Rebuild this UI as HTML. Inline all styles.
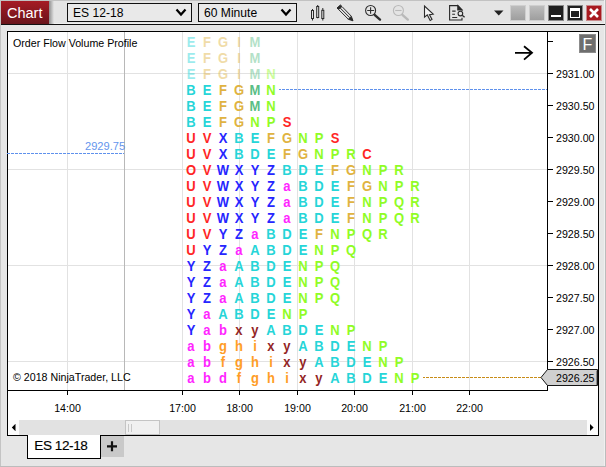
<!DOCTYPE html>
<html><head><meta charset="utf-8"><title>Chart</title>
<style>
*{margin:0;padding:0;box-sizing:border-box}
html,body{width:606px;height:467px;overflow:hidden;background:#e6e6e6;font-family:"Liberation Sans",sans-serif}
body{position:relative}
i,b{font-style:normal}
#topbar{position:absolute;left:0;top:0;width:606px;height:24px;background:#e4e4e4;border-top:1px solid #c2c2c2;border-bottom:1px solid #f0f0f0}
#topline{position:absolute;left:1px;top:24px;width:604px;height:1px;background:#111}
#chartbtn{position:absolute;left:1px;top:1px;width:48px;height:23px;background:linear-gradient(#a61b24,#69141b);color:#fff;font-size:15.2px;line-height:24.4px;padding-left:6.3px}
#chartbtn span{display:inline-block;transform:scaleX(.955);transform-origin:0 50%}
#chartsh{position:absolute;left:49px;top:1px;width:5px;height:23px;background:linear-gradient(90deg,#8e8e8e,#e4e4e4)}
.dd{position:absolute;top:3px;height:19px;border:1px solid #111;background:#e9e9e9;font-size:12.1px;line-height:19px;padding-left:5px;color:#000}
.dd svg{position:absolute;right:4px;top:4px}
#panel{position:absolute;left:7px;top:31px;width:592px;height:405px;background:#fff;border:1px solid #000}
#plot{position:absolute;left:8px;top:32px;width:539px;height:358px;background:#fff;overflow:hidden}
.vg{position:absolute;top:32px;width:1px;height:358px;background:#e2e2e2}
.hg{position:absolute;left:8px;width:539px;height:1px;background:#e2e2e2}
#sess{position:absolute;left:124px;top:32px;width:1px;height:358px;background:#b8b8b8}
#yaxis{position:absolute;left:547px;top:32px;width:1px;height:359px;background:#000}
#xaxis{position:absolute;left:8px;top:390px;width:540px;height:1px;background:#000}
.tk{position:absolute;left:548px;width:5px;height:1px;background:#000}
.tt{position:absolute;top:391px;width:1px;height:4px;background:#000}
.pl{position:absolute;left:556px;font-size:10.67px;line-height:14px;color:#000;white-space:nowrap}
.tl{position:absolute;top:401px;width:41px;text-align:center;font-size:10.67px;line-height:14px;color:#000}
.row{position:absolute;left:183px;height:16px;white-space:nowrap;font-size:14px;line-height:16px;font-weight:bold}
.row b{display:inline-block;width:16px;text-align:center;transform:scaleX(.93)}
.fade{opacity:.45}
.r{color:#ff2626}.b{color:#2626ff}.m{color:#ff26ff}.o{color:#ff9d26}.n{color:#932626}
.t{color:#26d5d8}.g{color:#e0b341}.s{color:#59be86}.l{color:#90fc26}
#title{position:absolute;left:13px;top:36px;font-size:10.67px;line-height:14px;color:#000}
#copy{position:absolute;left:13px;top:370px;font-size:10.67px;line-height:14px;color:#000}
#lvl{position:absolute;left:85px;top:139px;font-size:11.1px;line-height:14px;color:#6495ed}
.dash{position:absolute;height:1px}
#fbtn{position:absolute;left:579px;top:34px;width:17px;height:19px;background:#6e6e6e;border:1px solid #8c8c8c;color:#fff;font-size:16px;line-height:19px;text-align:center}
#scroll{position:absolute;left:8px;top:420px;width:590px;height:15px;background:#e2e2e2;border-left:11px solid #fcfcfc;border-right:11px solid #fcfcfc}
#thumb{position:absolute;left:125px;top:420px;width:35px;height:15px;background:#f0f0f0;border:1px solid #c4c4c4}
#tab{position:absolute;left:27px;top:435px;width:74px;height:24px;background:#fff;border:1px solid #000;border-top:none;font-size:13.6px;line-height:22.6px;padding-left:6.3px;letter-spacing:-.45px;-webkit-text-stroke:.15px #000}
#plus{position:absolute;left:101px;top:436px;width:23px;height:21px;background:#c9c9c9}
#pricemark{position:absolute;left:541px;top:370px}
.wb{position:absolute;top:5px;width:16px;height:16px}
</style></head><body>
<div id="topbar"></div><i style="position:absolute;left:0;top:0;width:1px;height:467px;background:#c4c4c4"></i><i style="position:absolute;left:604px;top:0;width:1px;height:467px;background:#f0f0f0"></i><i style="position:absolute;left:605px;top:0;width:1px;height:467px;background:#bcbcbc"></i><i style="position:absolute;left:0;top:466px;width:606px;height:1px;background:#bcbcbc"></i><div id="topline"></div>
<div id="chartsh"></div><div id="chartbtn"><span>Chart</span></div>
<div class="dd" style="left:67px;width:125px">ES 12-18<svg width="12" height="9" viewBox="0 0 12 9"><path d="M1.5 1.5 L6 6.5 L10.5 1.5" fill="none" stroke="#000" stroke-width="2.2"/></svg></div>
<div class="dd" style="left:198px;width:99px">60 Minute<svg width="12" height="9" viewBox="0 0 12 9"><path d="M1.5 1.5 L6 6.5 L10.5 1.5" fill="none" stroke="#000" stroke-width="2.2"/></svg></div>
<svg id="icons" style="position:absolute;left:300px;top:0" width="306" height="24" viewBox="300 0 306 24">
<!-- bars -->
<g fill="none" stroke="#2a2a2a" stroke-width="1"><rect x="311.5" y="10.5" width="2" height="8"/><path d="M312.5 9v1.5M312.5 18.5v2"/>
<rect x="316.7" y="6.5" width="2" height="11"/><path d="M317.7 5v1.5M317.7 17.5v0.8"/>
<rect x="321.8" y="10.3" width="2" height="8.2"/><path d="M322.8 8v2.3M322.8 18.5v2"/></g>
<!-- pencil -->
<g stroke="#2a2a2a" stroke-width="1" fill="none"><path d="M337 8 L340.4 5 L342 6.5 L338.5 9.5 Z" fill="#2a2a2a"/><path d="M338.7 9.6 L348.3 19.2 M342 6.6 L351.3 16.2 M340.3 8.1 L349.8 17.7"/><path d="M348.3 19.3 L351.3 16.3 L353 20.8 Z" fill="#2a2a2a"/></g>
<!-- zoom in -->
<g fill="none" stroke="#2e2e2e"><circle cx="370.6" cy="10.5" r="5" stroke-width="1.1"/><path d="M367.2 10.5h7M370.6 7.3v6.4" stroke-width="1.1"/><path d="M374.6 14.8 L380 19.6" stroke-width="2.4" stroke-linecap="round"/></g>
<!-- zoom out -->
<g fill="none" stroke="#b9b9b9"><circle cx="398.4" cy="10.5" r="5" stroke-width="1.1"/><path d="M395.2 10.5h6.4" stroke-width="1.1"/><path d="M402.4 14.8 L407.8 19.6" stroke-width="2.4" stroke-linecap="round"/></g>
<!-- pointer -->
<path d="M424.5 6 L424.5 17.2 L427.3 14.9 L430.2 20.4 L432 19.4 L429.4 14.6 L433.2 14.2 Z" fill="#f4f4f4" stroke="#2a2a2a" stroke-width="1.1" stroke-linejoin="miter"/>
<!-- doc -->
<g fill="none" stroke="#2a2a2a" stroke-width="1.1"><path d="M462 10.5 L462 10 L457.8 5.6 H449.6 V20 H462 V17.8"/><path d="M457.8 5.6 V10 H462 Z" fill="#2a2a2a"/><path d="M452.2 11.1h3.4M452.2 14.3h2.8M452.2 17.5h5"/><circle cx="460.4" cy="13.6" r="2.3"/><path d="M462.2 15.3 L464.6 17.3" stroke-width="1.4"/></g>
<!-- triangle -->
<path d="M494 10.5 H503.5 L498.75 15.5 Z" fill="#222"/>
</svg>
<div class="wb" style="left:510px;background:linear-gradient(#bcbcbc,#9e9e9e);border:1px solid #cfcfcf"></div>
<div class="wb" style="left:529px;background:linear-gradient(#bcbcbc,#9e9e9e);border:1px solid #cfcfcf"></div>
<div class="wb" style="left:548px;background:#1e1e1e;border:1px solid #8a8a8a"><i style="position:absolute;left:2px;top:9px;width:10px;height:2px;background:#fff"></i></div>
<div class="wb" style="left:567px;background:#1e1e1e;border:1px solid #8a8a8a"><i style="position:absolute;left:2px;top:2px;width:10px;height:10px;border:1px solid #fff;border-top:3px solid #fff"></i></div>
<div class="wb" style="left:586px;background:#a81a20;border:1px solid #c98a8c"><svg style="position:absolute;left:-1px;top:-1px" width="16" height="16" viewBox="0 0 16 16"><path d="M4 4 L12 12 M12 4 L4 12" stroke="#fff" stroke-width="2.6"/></svg></div>

<div id="panel"></div><div id="fbtn">F</div>
<div id="plot"></div>
<i class="vg" style="left:67px"></i>
<i class="vg" style="left:182px"></i>
<i class="vg" style="left:239px"></i>
<i class="vg" style="left:297px"></i>
<i class="vg" style="left:354px"></i>
<i class="vg" style="left:412px"></i>
<i class="vg" style="left:469px"></i>
<i class="hg" style="top:73px"></i>
<i class="hg" style="top:169px"></i>
<i class="hg" style="top:265px"></i>
<i class="hg" style="top:361px"></i>
<i id="sess"></i>
<div id="title">Order Flow Volume Profile</div>
<div id="copy">© 2018 NinjaTrader, LLC</div>
<div id="lvl">2929.75</div>
<svg style="position:absolute;left:0;top:0" width="606" height="467">
<path d="M7 153.5 H124" stroke="#5f91ec" stroke-width="1" stroke-dasharray="3 1" fill="none"/>
<path d="M279 89.5 H547" stroke="#5f91ec" stroke-width="1" stroke-dasharray="3 1" stroke-dashoffset="1" fill="none"/>
<path d="M423 377.5 H541" stroke="#c88c18" stroke-width="1" stroke-dasharray="3 1" stroke-dashoffset="1" fill="none"/>
<path d="M515 52.8 H532 M524 46.2 L532 52.8 L524 59.6" stroke="#000" stroke-width="1.8" fill="none"/>
</svg>
<div class="row fade" style="top:34px"><b class="t">E</b><b class="g">F</b><b class="g">G</b><b class="g">I</b><b class="s">M</b></div>
<div class="row fade" style="top:50px"><b class="t">E</b><b class="g">F</b><b class="g">G</b><b class="g">I</b><b class="s">M</b></div>
<div class="row fade" style="top:66px"><b class="t">E</b><b class="g">F</b><b class="g">G</b><b class="g">I</b><b class="s">M</b><b class="l">N</b></div>
<div class="row" style="top:82px"><b class="t">B</b><b class="t">E</b><b class="g">F</b><b class="g">G</b><b class="s">M</b><b class="l">N</b></div>
<div class="row" style="top:98px"><b class="t">B</b><b class="t">E</b><b class="g">F</b><b class="g">G</b><b class="s">M</b><b class="l">N</b></div>
<div class="row" style="top:114px"><b class="t">B</b><b class="t">E</b><b class="g">F</b><b class="g">G</b><b class="l">N</b><b class="l">P</b><b class="r">S</b></div>
<div class="row" style="top:130px"><b class="r">U</b><b class="r">V</b><b class="b">X</b><b class="t">B</b><b class="t">E</b><b class="g">F</b><b class="g">G</b><b class="l">N</b><b class="l">P</b><b class="r">S</b></div>
<div class="row" style="top:146px"><b class="r">U</b><b class="r">V</b><b class="b">X</b><b class="t">B</b><b class="t">D</b><b class="t">E</b><b class="g">F</b><b class="g">G</b><b class="l">N</b><b class="l">P</b><b class="l">R</b><b class="r">C</b></div>
<div class="row" style="top:162px"><b class="r">O</b><b class="r">V</b><b class="b">W</b><b class="b">X</b><b class="b">Y</b><b class="b">Z</b><b class="t">B</b><b class="t">D</b><b class="t">E</b><b class="g">F</b><b class="g">G</b><b class="l">N</b><b class="l">P</b><b class="l">R</b></div>
<div class="row" style="top:178px"><b class="r">U</b><b class="r">V</b><b class="b">W</b><b class="b">X</b><b class="b">Y</b><b class="b">Z</b><b class="m">a</b><b class="t">B</b><b class="t">D</b><b class="t">E</b><b class="g">F</b><b class="g">G</b><b class="l">N</b><b class="l">P</b><b class="l">R</b></div>
<div class="row" style="top:194px"><b class="r">U</b><b class="r">V</b><b class="b">W</b><b class="b">X</b><b class="b">Y</b><b class="b">Z</b><b class="m">a</b><b class="t">B</b><b class="t">D</b><b class="t">E</b><b class="g">F</b><b class="l">N</b><b class="l">P</b><b class="l">Q</b><b class="l">R</b></div>
<div class="row" style="top:210px"><b class="r">U</b><b class="r">V</b><b class="b">W</b><b class="b">X</b><b class="b">Y</b><b class="b">Z</b><b class="m">a</b><b class="t">B</b><b class="t">D</b><b class="t">E</b><b class="g">F</b><b class="l">N</b><b class="l">P</b><b class="l">Q</b><b class="l">R</b></div>
<div class="row" style="top:226px"><b class="r">U</b><b class="r">V</b><b class="b">Y</b><b class="b">Z</b><b class="m">a</b><b class="t">B</b><b class="t">D</b><b class="t">E</b><b class="g">F</b><b class="l">N</b><b class="l">P</b><b class="l">Q</b><b class="l">R</b></div>
<div class="row" style="top:242px"><b class="r">U</b><b class="b">Y</b><b class="b">Z</b><b class="m">a</b><b class="t">A</b><b class="t">B</b><b class="t">D</b><b class="t">E</b><b class="l">N</b><b class="l">P</b><b class="l">Q</b></div>
<div class="row" style="top:258px"><b class="b">Y</b><b class="b">Z</b><b class="m">a</b><b class="t">A</b><b class="t">B</b><b class="t">D</b><b class="t">E</b><b class="l">N</b><b class="l">P</b><b class="l">Q</b></div>
<div class="row" style="top:274px"><b class="b">Y</b><b class="b">Z</b><b class="m">a</b><b class="t">A</b><b class="t">B</b><b class="t">D</b><b class="t">E</b><b class="l">N</b><b class="l">P</b><b class="l">Q</b></div>
<div class="row" style="top:290px"><b class="b">Y</b><b class="b">Z</b><b class="m">a</b><b class="t">A</b><b class="t">B</b><b class="t">D</b><b class="t">E</b><b class="l">N</b><b class="l">P</b><b class="l">Q</b></div>
<div class="row" style="top:306px"><b class="b">Y</b><b class="m">a</b><b class="t">A</b><b class="t">B</b><b class="t">D</b><b class="t">E</b><b class="l">N</b><b class="l">P</b></div>
<div class="row" style="top:322px"><b class="b">Y</b><b class="m">a</b><b class="m">b</b><b class="n">x</b><b class="n">y</b><b class="t">A</b><b class="t">B</b><b class="t">D</b><b class="t">E</b><b class="l">N</b><b class="l">P</b></div>
<div class="row" style="top:338px"><b class="m">a</b><b class="m">b</b><b class="o">g</b><b class="o">h</b><b class="o">i</b><b class="n">x</b><b class="n">y</b><b class="t">A</b><b class="t">B</b><b class="t">D</b><b class="t">E</b><b class="l">N</b><b class="l">P</b></div>
<div class="row" style="top:354px"><b class="m">a</b><b class="m">b</b><b class="o">f</b><b class="o">g</b><b class="o">h</b><b class="o">i</b><b class="n">x</b><b class="n">y</b><b class="t">A</b><b class="t">B</b><b class="t">D</b><b class="t">E</b><b class="l">N</b><b class="l">P</b></div>
<div class="row" style="top:370px"><b class="m">a</b><b class="m">b</b><b class="m">d</b><b class="o">f</b><b class="o">g</b><b class="o">h</b><b class="o">i</b><b class="n">x</b><b class="n">y</b><b class="t">A</b><b class="t">B</b><b class="t">D</b><b class="t">E</b><b class="l">N</b><b class="l">P</b></div>
<i id="yaxis"></i><i id="xaxis"></i>
<i class="tk" style="top:41px"></i>
<div class="pl" style="top:67px">2931.00</div><i class="tk" style="top:73px"></i>
<div class="pl" style="top:99px">2930.50</div><i class="tk" style="top:105px"></i>
<div class="pl" style="top:131px">2930.00</div><i class="tk" style="top:137px"></i>
<div class="pl" style="top:163px">2929.50</div><i class="tk" style="top:169px"></i>
<div class="pl" style="top:195px">2929.00</div><i class="tk" style="top:201px"></i>
<div class="pl" style="top:227px">2928.50</div><i class="tk" style="top:233px"></i>
<div class="pl" style="top:259px">2928.00</div><i class="tk" style="top:265px"></i>
<div class="pl" style="top:291px">2927.50</div><i class="tk" style="top:297px"></i>
<div class="pl" style="top:323px">2927.00</div><i class="tk" style="top:329px"></i>
<div class="pl" style="top:355px">2926.50</div><i class="tk" style="top:361px"></i>
<svg style="position:absolute;left:0;top:0" width="606" height="467"><path d="M541 377.5 L547.5 369.5 H597.5 V385.5 H547.5 Z" fill="#d0d0d0" stroke="#161616" stroke-width="1"/><path d="M596.5 370.5V385" stroke="#8a8a8a"/></svg>
<div class="pl" style="top:371px">2926.25</div>
<div class="tl" style="left:47px">14:00</div><i class="tt" style="left:67px"></i>
<div class="tl" style="left:162px">17:00</div><i class="tt" style="left:182px"></i>
<div class="tl" style="left:219px">18:00</div><i class="tt" style="left:239px"></i>
<div class="tl" style="left:277px">19:00</div><i class="tt" style="left:297px"></i>
<div class="tl" style="left:334px">20:00</div><i class="tt" style="left:354px"></i>
<div class="tl" style="left:392px">21:00</div><i class="tt" style="left:412px"></i>
<div class="tl" style="left:449px">22:00</div><i class="tt" style="left:469px"></i>
<div id="scroll"></div><div id="thumb"></div>
<svg style="position:absolute;left:8px;top:420px" width="590" height="15"><path d="M7.5 3.7 L3.8 7.5 L7.5 11.3 Z M582 4 L585.6 7.5 L582 11 Z" fill="#000"/><path d="M120.5 4v8M123.5 4v8" stroke="#c8c8c8"/></svg>
<div id="tab">ES 12-18</div>
<div id="plus"><svg width="23" height="21"><path d="M6 10.3 H16 M11 5.3 V15.3" stroke="#111" stroke-width="2.2"/></svg></div>
</body></html>
